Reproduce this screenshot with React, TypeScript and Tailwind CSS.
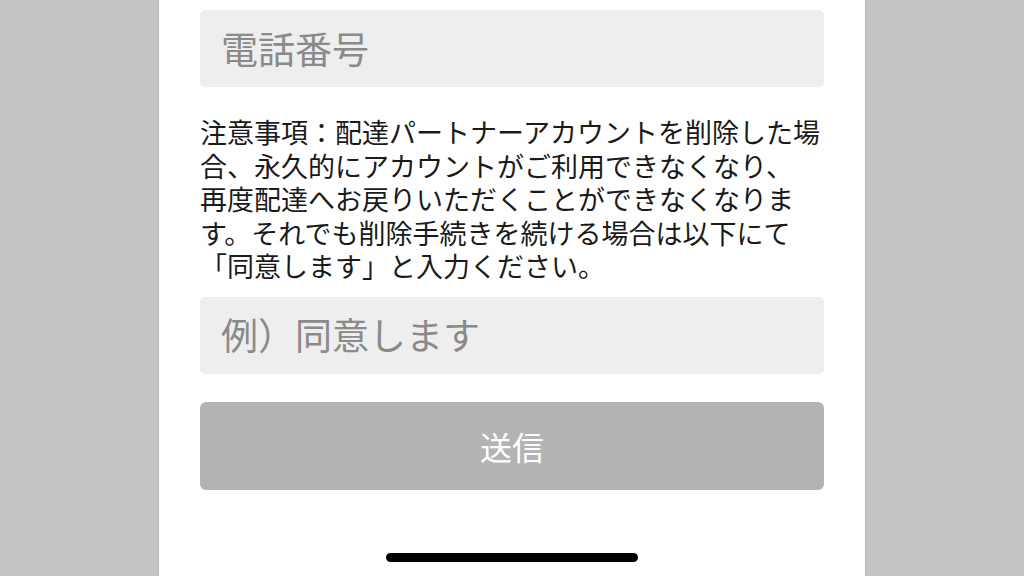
const notice = [
  "注意事項：配達パートナーアカウントを削除した場",
  "合、永久的にアカウントがご利用できなくなり、",
  "再度配達へお戻りいただくことができなくなりま",
  "す。それでも削除手続きを続ける場合は以下にて",
  "「同意します」と入力ください。",
];

const font = "font-['Hiragino_Sans','Noto_Sans_CJK_JP',sans-serif]";

export default function App() {
  return (
    <div className={`flex h-[576px] w-[1024px] justify-center overflow-hidden bg-[#c4c4c4] ${font}`}>
      <div className="flex w-[708px] flex-col border-x border-[#b9b9b9] bg-white px-[41px] pt-[10px]">
        {/* Phone number */}
        <div className="flex h-[76px] items-center rounded-[5px] bg-[#eeeeee] px-[21px] shadow-[0_1px_1px_rgba(0,0,0,0.08)]">
          <span className="text-[37px] leading-none text-[#8a8a8a]">電話番号</span>
        </div>

        {/* Notice */}
        <div className="mt-[29px] text-[27px] leading-[33.5px] text-[#1a1a1a]">
          {notice.map((line, i) => (
            <div key={i} className="whitespace-nowrap">{line}</div>
          ))}
        </div>

        {/* Confirm input */}
        <div className="mt-[14px] flex h-[76px] items-center rounded-[5px] bg-[#eeeeee] px-[21px] shadow-[0_1px_1px_rgba(0,0,0,0.08)]">
          <span className="text-[37px] leading-none text-[#8a8a8a]">例）同意します</span>
        </div>

        {/* Submit */}
        <button className="mt-[29px] flex h-[88px] items-center justify-center rounded-[6px] bg-[#b3b3b3]">
          <span className="text-[32px] leading-none text-white">送信</span>
        </button>

        {/* Home indicator */}
        <div className="mt-[63px] flex justify-center">
          <div className="h-[9px] w-[252px] rounded-full bg-black" />
        </div>
      </div>
    </div>
  );
}
